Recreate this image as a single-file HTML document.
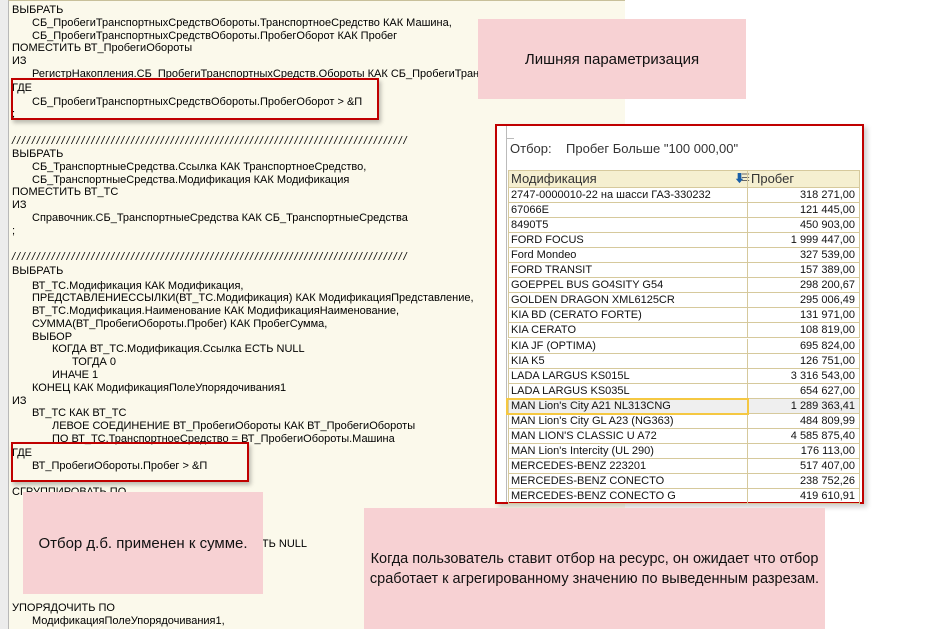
<!DOCTYPE html>
<html><head><meta charset="utf-8"><style>
*{margin:0;padding:0;box-sizing:border-box}
body{width:946px;height:629px;overflow:hidden;background:#fff;font-family:"Liberation Sans","Noto Sans CJK SC",sans-serif;position:relative}
#code{position:absolute;left:8px;top:0;width:617px;height:629px;background:#fbf9eb;border-top:1px solid #c8c09a;border-left:1px solid #b8b8b8}
#lb{position:absolute;left:0;top:0;width:8px;height:629px;background:#ececec}
.l{position:absolute;font-size:11px;color:#000;white-space:nowrap;line-height:13px}
.sl{letter-spacing:1.9px;font-style:italic}
.pink{position:absolute;background:#f7d1d3;color:#111;text-align:center;display:flex;align-items:center;justify-content:center}
.red{position:absolute;border:2px solid #c00000;box-shadow:2px 3px 4px rgba(0,0,0,.25)}
#panel{position:absolute;left:495px;top:124px;width:369px;height:380px;border:2px solid #c00000;background:#fff;box-shadow:3px 3px 5px rgba(0,0,0,.2)}
.row{position:absolute;left:11px;width:352px;height:15px;border-bottom:1px solid #d6c99c;font-size:11px;line-height:14px;color:#111}
.row span{position:absolute;top:0}
.c1{left:2px}
.c2{right:4px}
.sep{position:absolute;left:238px;top:0;bottom:0;border-left:1px solid #d6c99c}
</style></head><body>
<div id="lb"></div>
<div id="code">
<div class="l" style="left:3px;top:3px">ВЫБРАТЬ</div>
<div class="l" style="left:23px;top:16px">СБ_ПробегиТранспортныхСредствОбороты.ТранспортноеСредство КАК Машина,</div>
<div class="l" style="left:23px;top:29px">СБ_ПробегиТранспортныхСредствОбороты.ПробегОборот КАК Пробег</div>
<div class="l" style="left:3px;top:41px">ПОМЕСТИТЬ ВТ_ПробегиОбороты</div>
<div class="l" style="left:3px;top:54px">ИЗ</div>
<div class="l" style="left:23px;top:67px">РегистрНакопления.СБ_ПробегиТранспортныхСредств.Обороты КАК СБ_ПробегиТранспортныхСредствОбороты</div>
<div class="l" style="left:3px;top:81px">ГДЕ</div>
<div class="l" style="left:23px;top:95px">СБ_ПробегиТранспортныхСредствОбороты.ПробегОборот &gt; &amp;П</div>
<div class="l" style="left:3px;top:107px">;</div>
<div class="l sl" style="left:3px;top:134px">////////////////////////////////////////////////////////////////////////////////</div>
<div class="l" style="left:3px;top:147px">ВЫБРАТЬ</div>
<div class="l" style="left:23px;top:160px">СБ_ТранспортныеСредства.Ссылка КАК ТранспортноеСредство,</div>
<div class="l" style="left:23px;top:173px">СБ_ТранспортныеСредства.Модификация КАК Модификация</div>
<div class="l" style="left:3px;top:185px">ПОМЕСТИТЬ ВТ_ТС</div>
<div class="l" style="left:3px;top:198px">ИЗ</div>
<div class="l" style="left:23px;top:211px">Справочник.СБ_ТранспортныеСредства КАК СБ_ТранспортныеСредства</div>
<div class="l" style="left:3px;top:224px">;</div>
<div class="l sl" style="left:3px;top:250px">////////////////////////////////////////////////////////////////////////////////</div>
<div class="l" style="left:3px;top:264px">ВЫБРАТЬ</div>
<div class="l" style="left:23px;top:279px">ВТ_ТС.Модификация КАК Модификация,</div>
<div class="l" style="left:23px;top:291px">ПРЕДСТАВЛЕНИЕССЫЛКИ(ВТ_ТС.Модификация) КАК МодификацияПредставление,</div>
<div class="l" style="left:23px;top:304px">ВТ_ТС.Модификация.Наименование КАК МодификацияНаименование,</div>
<div class="l" style="left:23px;top:317px">СУММА(ВТ_ПробегиОбороты.Пробег) КАК ПробегСумма,</div>
<div class="l" style="left:23px;top:330px">ВЫБОР</div>
<div class="l" style="left:43px;top:342px">КОГДА ВТ_ТС.Модификация.Ссылка ЕСТЬ NULL</div>
<div class="l" style="left:63px;top:355px">ТОГДА 0</div>
<div class="l" style="left:43px;top:368px">ИНАЧЕ 1</div>
<div class="l" style="left:23px;top:381px">КОНЕЦ КАК МодификацияПолеУпорядочивания1</div>
<div class="l" style="left:3px;top:394px">ИЗ</div>
<div class="l" style="left:23px;top:406px">ВТ_ТС КАК ВТ_ТС</div>
<div class="l" style="left:43px;top:419px">ЛЕВОЕ СОЕДИНЕНИЕ ВТ_ПробегиОбороты КАК ВТ_ПробегиОбороты</div>
<div class="l" style="left:43px;top:432px">ПО ВТ_ТС.ТранспортноеСредство = ВТ_ПробегиОбороты.Машина</div>
<div class="l" style="left:3px;top:446px">ГДЕ</div>
<div class="l" style="left:23px;top:459px">ВТ_ПробегиОбороты.Пробег &gt; &amp;П</div>
<div class="l" style="left:3px;top:485px">СГРУППИРОВАТЬ ПО</div>
<div class="l" style="left:238px;top:537px">ЕСТЬ NULL</div>
<div class="l" style="left:3px;top:601px">УПОРЯДОЧИТЬ ПО</div>
<div class="l" style="left:23px;top:614px">МодификацияПолеУпорядочивания1,</div>
</div>

<div class="red" style="left:11px;top:78px;width:368px;height:42px"></div>
<div class="red" style="left:11px;top:442px;width:238px;height:40px"></div>

<div class="pink" style="left:478px;top:19px;width:268px;height:80px;font-size:15px">Лишняя параметризация</div>

<div id="panel">
<div style="position:absolute;left:9px;top:0;bottom:0;border-left:1px solid #bbb"></div>
<div style="position:absolute;left:9px;top:12px;width:8px;border-top:1px solid #bbb"></div>
<div style="position:absolute;left:13px;top:15px;font-size:13px;color:#333;white-space:nowrap">Отбор:&nbsp;&nbsp;&nbsp;&nbsp;Пробег Больше "100 000,00"</div>
<div style="position:absolute;left:11px;top:44px;width:352px;height:18px;background:#f5efd0;border:1px solid #d6c99c;font-size:13px;color:#333;line-height:16px">
<span style="position:absolute;left:2px">Модификация</span>
<span style="position:absolute;left:225px;font-size:11px;color:#1a5fa8">⬇</span><span style="position:absolute;left:232px;font-size:10px;color:#666">☰</span>
<div class="sep"></div>
<span style="position:absolute;left:242px">Пробег</span>
</div>
<div id="rows"></div>
</div>

<div class="pink" style="left:23px;top:492px;width:240px;height:102px;font-size:15px">Отбор д.б. применен к сумме.</div>
<div class="pink" style="left:364px;top:508px;width:461px;height:121px;font-size:14.5px;line-height:20px">Когда пользователь ставит отбор на ресурс, он ожидает что отбор<br>сработает к агрегированному значению по выведенным разрезам.</div>

<script>
var d=[["2747-0000010-22 на шасси ГАЗ-330232","318 271,00"],["67066E","121 445,00"],["8490T5","450 903,00"],["FORD FOCUS","1 999 447,00"],["Ford Mondeo","327 539,00"],["FORD TRANSIT","157 389,00"],["GOEPPEL BUS GO4SITY G54","298 200,67"],["GOLDEN DRAGON XML6125CR","295 006,49"],["KIA BD (CERATO FORTE)","131 971,00"],["KIA CERATO","108 819,00"],["KIA JF (OPTIMA)","695 824,00"],["KIA K5","126 751,00"],["LADA LARGUS KS015L","3 316 543,00"],["LADA LARGUS KS035L","654 627,00"],["MAN Lion's City A21 NL313CNG","1 289 363,41"],["MAN Lion's City GL A23 (NG363)","484 809,99"],["MAN LION'S CLASSIC U A72","4 585 875,40"],["MAN Lion's Intercity (UL 290)","176 113,00"],["MERCEDES-BENZ 223201","517 407,00"],["MERCEDES-BENZ CONECTO","238 752,26"],["MERCEDES-BENZ CONECTO G","419 610,91"]];
var h="";for(var i=0;i<d.length;i++){var t=62+i*15.05;var bg=i==14?"background:#efefef;":"";
h+='<div class="row" style="top:'+t+'px;'+bg+'border-left:1px solid #d6c99c;border-right:1px solid #d6c99c"><span class="c1">'+d[i][0]+'</span><div class="sep"></div><span class="c2">'+d[i][1]+'</span></div>';}
h+='<div style="position:absolute;left:9px;top:'+(62+14*15.05-1)+'px;width:243px;height:17px;border:2px solid #f5c842"></div>';
document.getElementById("rows").innerHTML=h;
</script>
</body></html>
